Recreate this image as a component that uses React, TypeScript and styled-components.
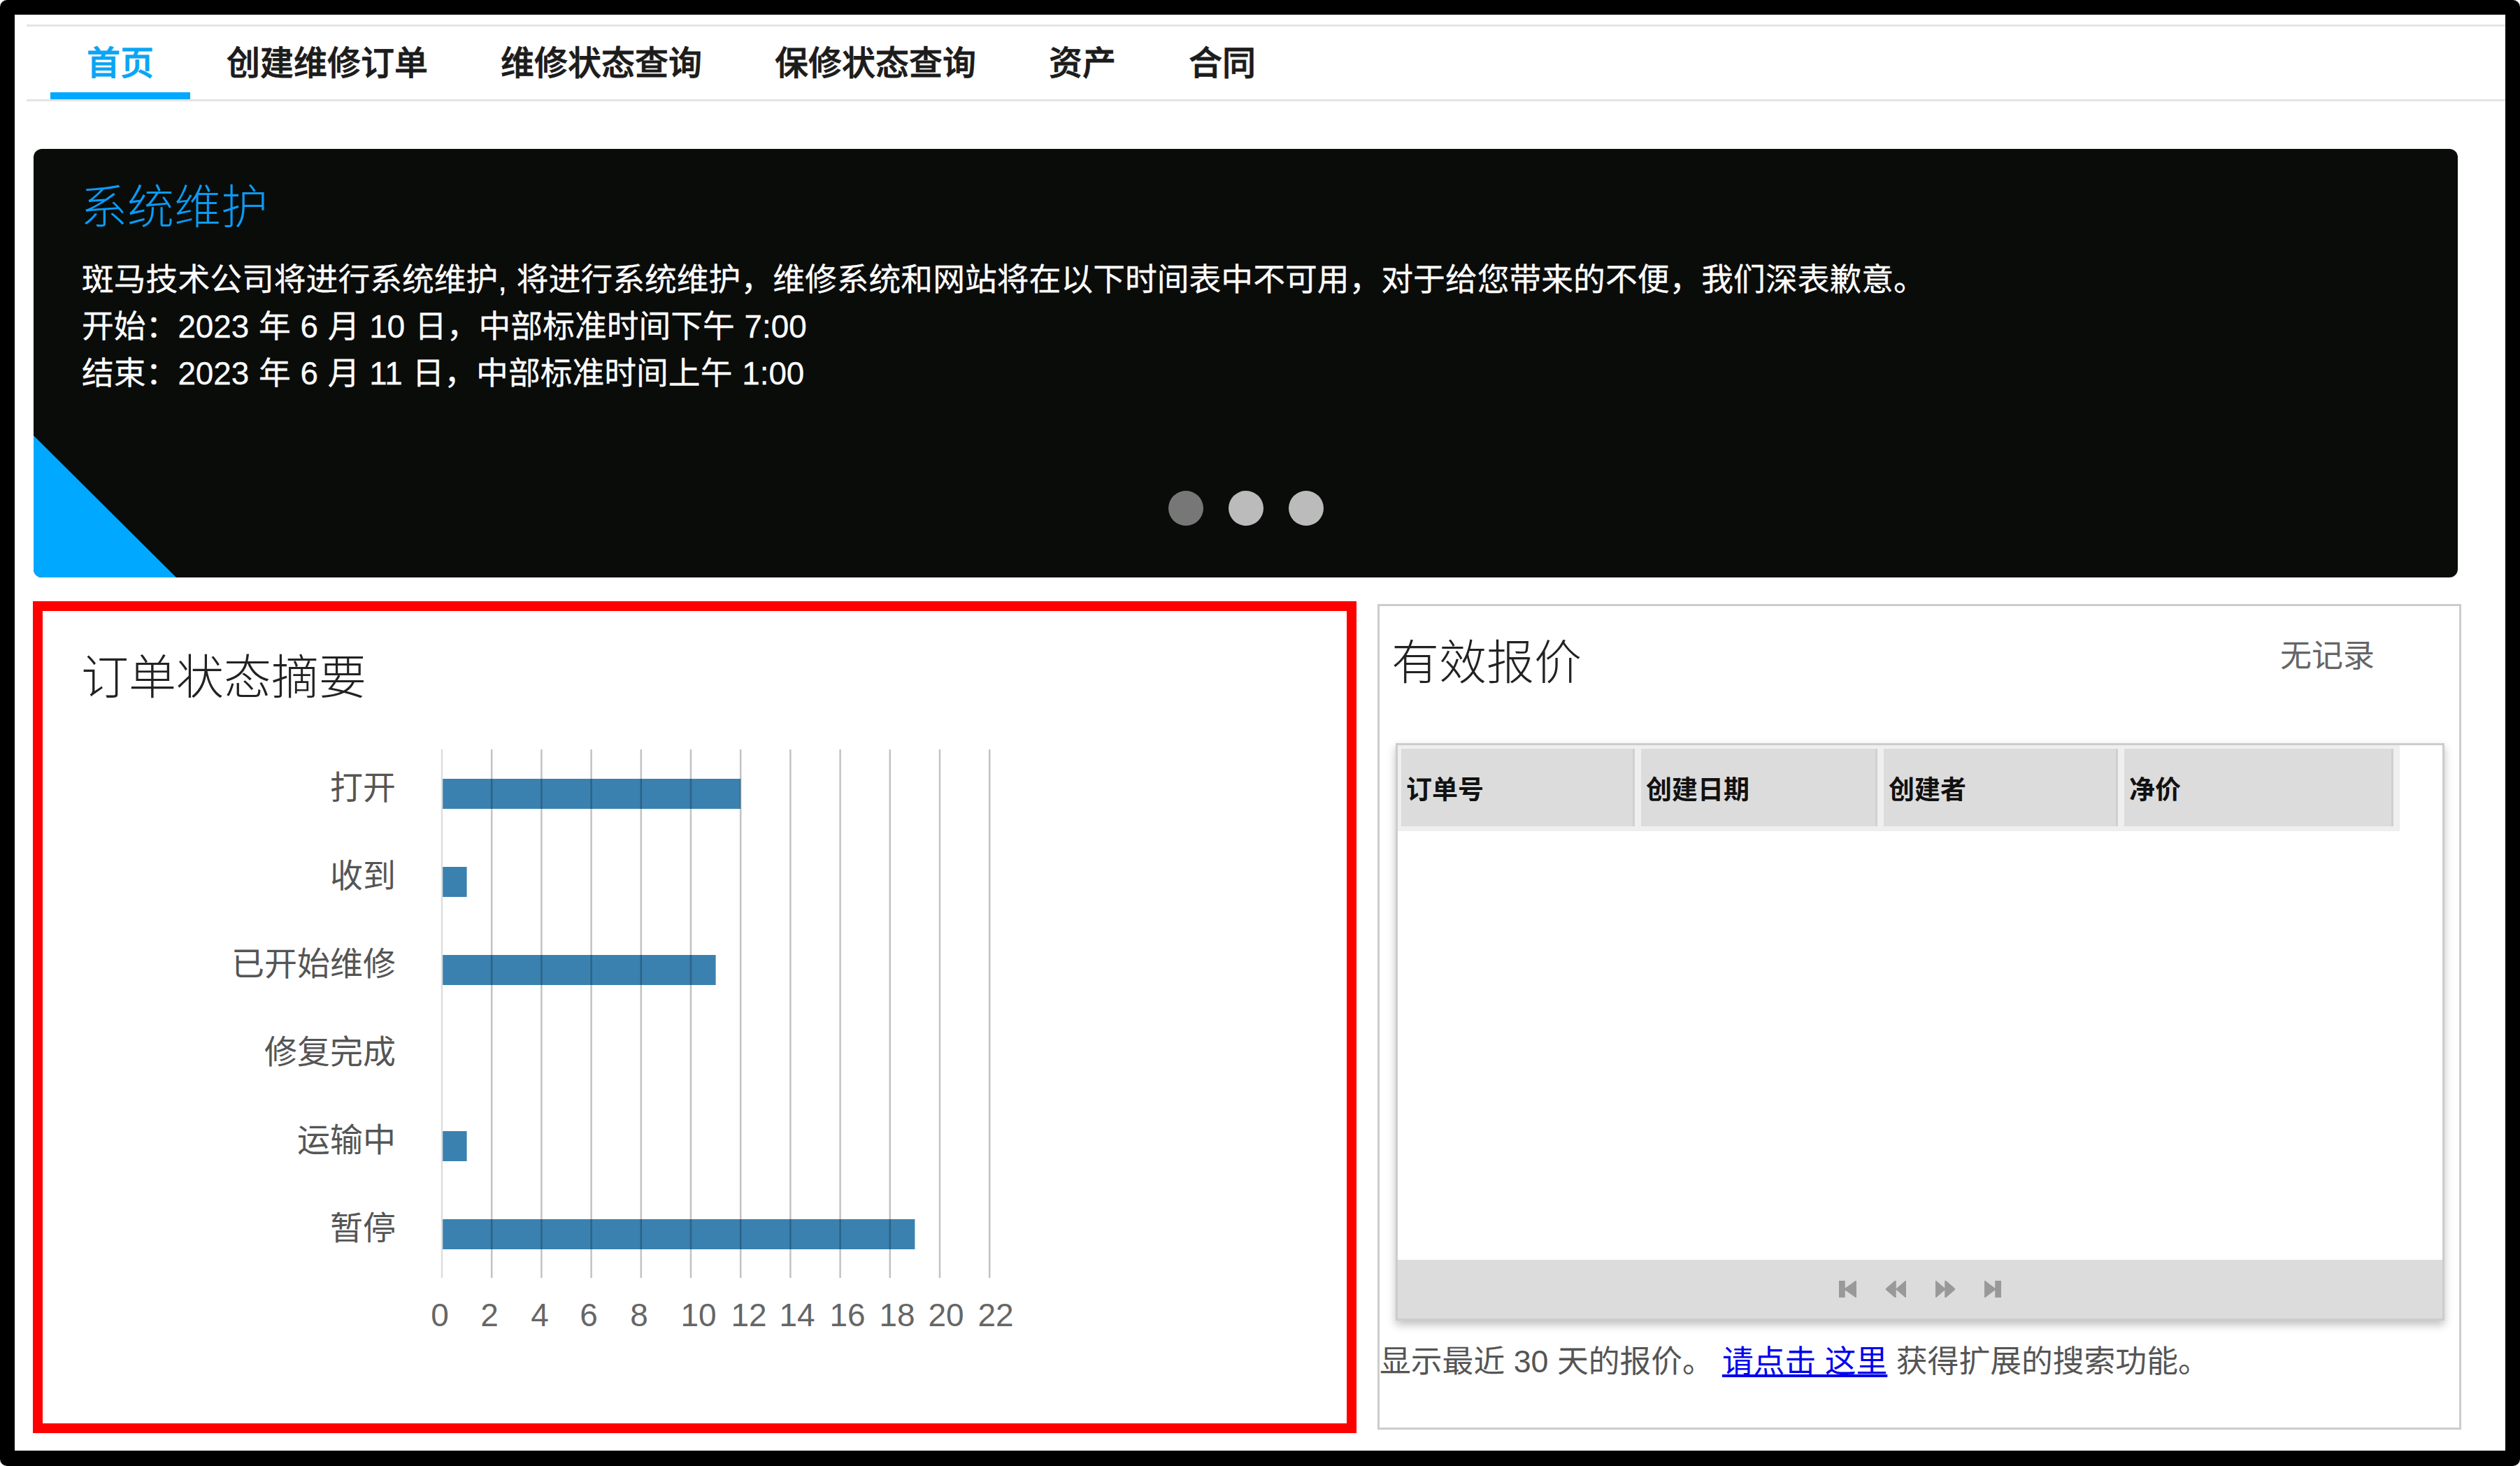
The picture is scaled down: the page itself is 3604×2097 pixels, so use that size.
import { FC } from "react";
import styled, { createGlobalStyle } from "styled-components";

const GlobalStyle = createGlobalStyle`
	html, body {
		margin: 0;
		padding: 0;
		background: #fff;
	}
	body {
		font-family: "Liberation Sans", "Noto Sans CJK SC", sans-serif;
	}
`;

const Frame = styled.div`
	box-sizing: border-box;
	width: 3604px;
	height: 2097px;
	border: 21px solid #000;
	border-bottom-width: 22px;
	border-radius: 10px;
	background: #fff;
	overflow: hidden;
`;

const Nav = styled.nav`
	display: flex;
	margin: 14px 0 0 17px;
	padding-left: 34px;
	border-top: 3px solid #e4e4e4;
	border-bottom: 3px solid #e4e4e4;
`;

const Tab = styled.a<{ $active?: boolean }>`
	box-sizing: border-box;
	height: 104px;
	display: flex;
	align-items: center;
	padding: 2px 52px 0;
	font-size: 48px;
	font-weight: 500;
	-webkit-text-stroke: 0.8px currentColor;
	color: ${props => (props.$active ? "#0aa5f5" : "#1c1c1c")};
	border-bottom: 10px solid ${props => (props.$active ? "#00a8ff" : "transparent")};
`;

const Banner = styled.section`
	position: relative;
	box-sizing: border-box;
	display: flex;
	flex-direction: column;
	width: 3467px;
	height: 613px;
	margin: 68px 0 0 27px;
	padding: 39px 69px 74px;
	border-radius: 12px;
	background: #0a0c0a;
	overflow: hidden;
`;

const Corner = styled.div`
	position: absolute;
	left: 0;
	bottom: 0;
	width: 204px;
	height: 203px;
	background: #00a8ff;
	clip-path: polygon(0 0, 100% 100%, 0 100%);
`;

const BannerTitle = styled.h2`
	margin: 0 0 0 -2px;
	font-size: 67px;
	font-weight: 300;
	line-height: 90px;
	color: #0a9bf5;
`;

const BannerText = styled.p`
	margin: 25px 0 0;
	font-size: 45.8px;
	word-spacing: 1px;
	line-height: 67px;
	-webkit-text-stroke: 0.3px currentColor;
	color: #fff;
`;

const Dots = styled.div`
	display: flex;
	justify-content: center;
	gap: 36px;
	margin-top: auto;
`;

const Dot = styled.span<{ $current?: boolean }>`
	width: 50px;
	height: 50px;
	border-radius: 50%;
	background: ${props => (props.$current ? "#777" : "#bbb")};
`;

const Row = styled.div`
	display: flex;
	align-items: flex-start;
	gap: 30px;
	margin: 34px 0 0 26px;
`;

const ChartPanel = styled.section`
	box-sizing: border-box;
	width: 1893px;
	height: 1190px;
	padding: 50px 0 0 55px;
	border: 14px solid #f00;
`;

const PanelTitle = styled.h3`
	margin: 0;
	font-size: 68px;
	font-weight: 300;
	line-height: 90px;
	color: #222;
`;

const ChartSvg = styled.svg`
	display: block;
	margin: 46px 0 0 -16px;
`;

const ChartLabel = styled.text`
	font-size: 47px;
	fill: #555;
`;

const TickLabel = styled.text`
	font-size: 46px;
	fill: #666;
`;

const QuotePanel = styled.section`
	box-sizing: border-box;
	width: 1550px;
	height: 1181px;
	margin-top: 4px;
	border: 3px solid #ccc;
`;

const QuoteHead = styled.div`
	display: flex;
	justify-content: space-between;
	height: 196px;
	padding: 36px 121px 0 17px;
	box-sizing: border-box;
`;

const NoRecords = styled.span`
	margin-top: 6px;
	font-size: 45px;
	line-height: 60px;
	color: #666;
`;

const Grid = styled.div`
	box-sizing: border-box;
	display: flex;
	flex-direction: column;
	width: 1500px;
	height: 826px;
	margin-left: 23px;
	border: 3px solid #ccc;
	box-shadow: 0 6px 12px rgba(0, 0, 0, 0.25);
`;

const GridHeader = styled.div`
	box-sizing: border-box;
	display: flex;
	gap: 9px;
	width: 1433px;
	height: 123px;
	padding: 5px 5px 7px 5px;
	background: #efefef;
`;

const HeaderCell = styled.div<{ $width: number }>`
	box-sizing: border-box;
	display: flex;
	align-items: center;
	width: ${props => props.$width}px;
	padding-left: 7px;
	border-right: 3px solid #d0d0d0;
	background: #dcdcdc;
	font-size: 37px;
	font-weight: 700;
	color: #111;
`;

const Pager = styled.div`
	display: flex;
	align-items: center;
	justify-content: center;
	gap: 42px;
	height: 84px;
	margin-top: auto;
	background: #dcdcdc;
`;

const Note = styled.p`
	margin: 28px 0 0;
	font-size: 44.8px;
	line-height: 60px;
	color: #555;
`;

const NoteLink = styled.a`
	margin-left: 12px;
	color: #00e;
	text-decoration: underline;
`;

const ORIGIN = 532;
const UNIT = 35.6;

const bars = [
	{ label: "打开", value: 12 },
	{ label: "收到", value: 1 },
	{ label: "已开始维修", value: 11 },
	{ label: "修复完成", value: 0 },
	{ label: "运输中", value: 1 },
	{ label: "暂停", value: 19 },
];

// tick labels don't sit exactly under the grid lines in the original
const ticks = [
	{ value: 0, x: 529 },
	{ value: 2, x: 600 },
	{ value: 4, x: 672 },
	{ value: 6, x: 742 },
	{ value: 8, x: 814 },
	{ value: 10, x: 899 },
	{ value: 12, x: 971 },
	{ value: 14, x: 1040 },
	{ value: 16, x: 1112 },
	{ value: 18, x: 1183 },
	{ value: 20, x: 1253 },
	{ value: 22, x: 1324 },
];

const StatusChart: FC = () => (
	<ChartSvg width={1400} height={860} viewBox="0 0 1400 860">
		{bars.map((bar, index) => (
			<g key={bar.label}>
				<ChartLabel x={466} y={83 + index * 126} textAnchor="end">
					{bar.label}
				</ChartLabel>
				<rect x={ORIGIN} y={54 + index * 126} width={bar.value * UNIT} height={43} fill="#3a81b0" />
			</g>
		))}
		{ticks.map(tick => (
			<g key={tick.value}>
				<line
					x1={ORIGIN + tick.value * UNIT}
					x2={ORIGIN + tick.value * UNIT}
					y1={12}
					y2={768}
					stroke={tick.value === 0 ? "#ddd" : "rgba(0,0,0,0.24)"}
					strokeWidth={2.5}
				/>
				<TickLabel x={tick.x} y={837} textAnchor="middle">
					{tick.value}
				</TickLabel>
			</g>
		))}
	</ChartSvg>
);

const pagerIcons = [
	{ width: 25, d: "M0 0H8V24H0ZM8 12L25 0V24Z" },
	{ width: 29, d: "M0 12L14 0V24ZM15 12L29 0V24Z" },
	{ width: 28, d: "M0 0L14 12L0 24ZM14 0L28 12L14 24Z" },
	{ width: 24, d: "M0 0L16 12L0 24ZM16 0H24V24H16Z" },
];

const headers = [
	{ title: "订单号", width: 334 },
	{ title: "创建日期", width: 338 },
	{ title: "创建者", width: 335 },
	{ title: "净价", width: 385 },
];

const App: FC = () => (
	<>
		<GlobalStyle />
		<Frame>
			<Nav>
				<Tab $active>首页</Tab>
				<Tab>创建维修订单</Tab>
				<Tab>维修状态查询</Tab>
				<Tab>保修状态查询</Tab>
				<Tab>资产</Tab>
				<Tab>合同</Tab>
			</Nav>

			<Banner>
				<Corner />
				<BannerTitle>系统维护</BannerTitle>
				<BannerText>
					斑马技术公司将进行系统维护, 将进行系统维护，维修系统和网站将在以下时间表中不可用，对于给您带来的不便，我们深表歉意。
					<br />
					开始：2023 年 6 月 10 日，中部标准时间下午 7:00
					<br />
					结束：2023 年 6 月 11 日，中部标准时间上午 1:00
				</BannerText>
				<Dots>
					<Dot $current />
					<Dot />
					<Dot />
				</Dots>
			</Banner>

			<Row>
				<ChartPanel>
					<PanelTitle>订单状态摘要</PanelTitle>
					<StatusChart />
				</ChartPanel>

				<QuotePanel>
					<QuoteHead>
						<PanelTitle>有效报价</PanelTitle>
						<NoRecords>无记录</NoRecords>
					</QuoteHead>
					<Grid>
						<GridHeader>
							{headers.map(header => (
								<HeaderCell key={header.title} $width={header.width}>
									{header.title}
								</HeaderCell>
							))}
						</GridHeader>
						<Pager>
							{pagerIcons.map(icon => (
								<svg key={icon.d} width={icon.width} height={24} viewBox={`0 0 ${icon.width} 24`}>
									<path d={icon.d} fill="#999" stroke="#999" strokeWidth={1.5} strokeLinejoin="round" />
								</svg>
							))}
						</Pager>
					</Grid>
					<Note>
						显示最近 30 天的报价。
						<NoteLink>请点击 这里</NoteLink> 获得扩展的搜索功能。
					</Note>
				</QuotePanel>
			</Row>
		</Frame>
	</>
);

export default App;
